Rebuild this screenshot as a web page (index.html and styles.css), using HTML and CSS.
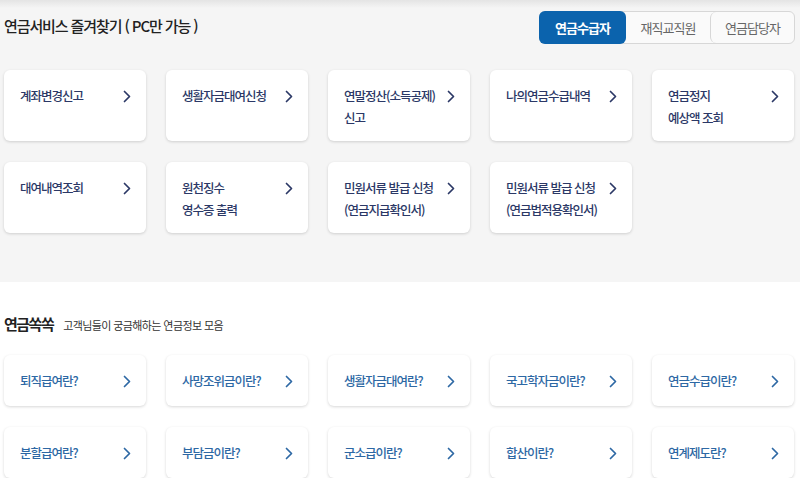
FILE: index.html
```html
<!DOCTYPE html>
<html lang="ko">
<head>
<meta charset="utf-8">
<title>연금서비스</title>
<link rel="stylesheet" href="styles.css">
</head>
<body>
<section class="fav">
  <div class="fav-head">
    <h2 class="fav-title">연금서비스 즐겨찾기 ( PC만 가능 )</h2>
    <div class="tabs">
      <button class="tab active">연금수급자</button>
      <button class="tab">재직교직원</button>
      <button class="tab">연금담당자</button>
    </div>
  </div>
  <div class="grid grid-fav">
    <a class="card">
      <span class="label">계좌변경신고</span>
      <svg class="chev" viewBox="0 0 8 13" width="8" height="13"><polyline points="1.5,1.5 6.5,6.5 1.5,11.5"/></svg>
    </a>
    <a class="card">
      <span class="label">생활자금대여신청</span>
      <svg class="chev" viewBox="0 0 8 13" width="8" height="13"><polyline points="1.5,1.5 6.5,6.5 1.5,11.5"/></svg>
    </a>
    <a class="card">
      <span class="label">연말정산(소득공제)<br>신고</span>
      <svg class="chev" viewBox="0 0 8 13" width="8" height="13"><polyline points="1.5,1.5 6.5,6.5 1.5,11.5"/></svg>
    </a>
    <a class="card">
      <span class="label">나의연금수급내역</span>
      <svg class="chev" viewBox="0 0 8 13" width="8" height="13"><polyline points="1.5,1.5 6.5,6.5 1.5,11.5"/></svg>
    </a>
    <a class="card">
      <span class="label">연금정지<br>예상액 조회</span>
      <svg class="chev" viewBox="0 0 8 13" width="8" height="13"><polyline points="1.5,1.5 6.5,6.5 1.5,11.5"/></svg>
    </a>
    <a class="card">
      <span class="label">대여내역조회</span>
      <svg class="chev" viewBox="0 0 8 13" width="8" height="13"><polyline points="1.5,1.5 6.5,6.5 1.5,11.5"/></svg>
    </a>
    <a class="card">
      <span class="label">원천징수<br>영수증 출력</span>
      <svg class="chev" viewBox="0 0 8 13" width="8" height="13"><polyline points="1.5,1.5 6.5,6.5 1.5,11.5"/></svg>
    </a>
    <a class="card">
      <span class="label">민원서류 발급 신청<br>(연금지급확인서)</span>
      <svg class="chev" viewBox="0 0 8 13" width="8" height="13"><polyline points="1.5,1.5 6.5,6.5 1.5,11.5"/></svg>
    </a>
    <a class="card">
      <span class="label">민원서류 발급 신청<br>(연금법적용확인서)</span>
      <svg class="chev" viewBox="0 0 8 13" width="8" height="13"><polyline points="1.5,1.5 6.5,6.5 1.5,11.5"/></svg>
    </a>
  </div>
</section>

<section class="info">
  <div class="info-head">
    <h2 class="info-title">연금쏙쏙</h2>
    <span class="info-sub">고객님들이 궁금해하는 연금정보 모음</span>
  </div>
  <div class="grid grid-info">
    <a class="card card-info"><span class="label">퇴직급여란?</span><svg class="chev" viewBox="0 0 8 13" width="8" height="13"><polyline points="1.5,1.5 6.5,6.5 1.5,11.5"/></svg></a>
    <a class="card card-info"><span class="label">사망조위금이란?</span><svg class="chev" viewBox="0 0 8 13" width="8" height="13"><polyline points="1.5,1.5 6.5,6.5 1.5,11.5"/></svg></a>
    <a class="card card-info"><span class="label">생활자금대여란?</span><svg class="chev" viewBox="0 0 8 13" width="8" height="13"><polyline points="1.5,1.5 6.5,6.5 1.5,11.5"/></svg></a>
    <a class="card card-info"><span class="label">국고학자금이란?</span><svg class="chev" viewBox="0 0 8 13" width="8" height="13"><polyline points="1.5,1.5 6.5,6.5 1.5,11.5"/></svg></a>
    <a class="card card-info"><span class="label">연금수급이란?</span><svg class="chev" viewBox="0 0 8 13" width="8" height="13"><polyline points="1.5,1.5 6.5,6.5 1.5,11.5"/></svg></a>
    <a class="card card-info"><span class="label">분할급여란?</span><svg class="chev" viewBox="0 0 8 13" width="8" height="13"><polyline points="1.5,1.5 6.5,6.5 1.5,11.5"/></svg></a>
    <a class="card card-info"><span class="label">부담금이란?</span><svg class="chev" viewBox="0 0 8 13" width="8" height="13"><polyline points="1.5,1.5 6.5,6.5 1.5,11.5"/></svg></a>
    <a class="card card-info"><span class="label">군소급이란?</span><svg class="chev" viewBox="0 0 8 13" width="8" height="13"><polyline points="1.5,1.5 6.5,6.5 1.5,11.5"/></svg></a>
    <a class="card card-info"><span class="label">합산이란?</span><svg class="chev" viewBox="0 0 8 13" width="8" height="13"><polyline points="1.5,1.5 6.5,6.5 1.5,11.5"/></svg></a>
    <a class="card card-info"><span class="label">연계제도란?</span><svg class="chev" viewBox="0 0 8 13" width="8" height="13"><polyline points="1.5,1.5 6.5,6.5 1.5,11.5"/></svg></a>
  </div>
</section>
</body>
</html>
```

FILE: styles.css
```css
* { box-sizing: border-box; }

html, body {
  margin: 0;
  padding: 0;
  background: #ffffff;
  font-family: "Noto Sans CJK KR", "Noto Sans", sans-serif;
}

.fav {
  height: 282px;
  background: linear-gradient(#e4e4e4 0, #f5f5f5 8px, #f5f5f5 100%);
  padding: 11px 5px 0 4px;
}

.fav-head {
  display: flex;
  justify-content: space-between;
  align-items: center;
  height: 33px;
}

.fav-title {
  margin: 0;
  font-size: 15px;
  font-weight: 500;
  letter-spacing: -1.1px;
  color: #222222;
  line-height: 20px;
  padding-bottom: 4px;
}

.tabs {
  display: flex;
  height: 33px;
  border: 1px solid #d7d7d7;
  border-radius: 6px;
  background: #fafafa;
}

.tab {
  border: 0;
  background: transparent;
  font-family: inherit;
  font-size: 13px;
  letter-spacing: -1px;
  color: #666666;
  padding: 0;
  width: 84px;
  height: 31px;
  line-height: 31px;
  border-left: 1px solid #d7d7d7;
  border-radius: 6px;
}

.tab:nth-child(2) { border-left: 0; }

.tab.active {
  background: #0b63ad;
  color: #ffffff;
  font-weight: 700;
  border-left: 0;
  width: 87px;
  margin: -1px 0 -1px -1px;
  height: 33px;
  line-height: 33px;
}

.grid {
  display: grid;
  grid-template-columns: repeat(5, 142px);
  column-gap: 20px;
}

.grid-fav {
  margin-top: 26px;
  grid-auto-rows: 71px;
  row-gap: 21px;
}

.card {
  display: flex;
  justify-content: space-between;
  align-items: flex-start;
  background: #ffffff;
  border-radius: 6px;
  box-shadow: 0 1px 3px rgba(0, 0, 0, 0.16);
  padding: 15px 15px 0 16px;
  color: #2b3866;
  text-decoration: none;
}

.label {
  font-size: 12.5px;
  font-weight: 500;
  letter-spacing: -1px;
  line-height: 22px;
}

.chev {
  flex: none;
  margin-top: 5px;
  fill: none;
  stroke: currentColor;
  stroke-width: 1.7;
  stroke-linecap: round;
  stroke-linejoin: round;
}

.info {
  padding: 32px 5px 0 4px;
}

.info-head {
  display: flex;
  align-items: baseline;
  gap: 10px;
  height: 20px;
}

.info-title {
  margin: 0;
  font-size: 15px;
  font-weight: 700;
  letter-spacing: -1.5px;
  color: #222222;
  line-height: 20px;
}

.info-sub {
  font-size: 11px;
  letter-spacing: -0.6px;
  color: #333333;
}

.grid-info {
  margin-top: 21px;
  grid-auto-rows: 51px;
  row-gap: 21px;
}

.card-info {
  align-items: center;
  padding: 0 15px 0 16px;
  color: #2d68a4;
}

.card-info .chev {
  margin-top: 2px;
}
```
